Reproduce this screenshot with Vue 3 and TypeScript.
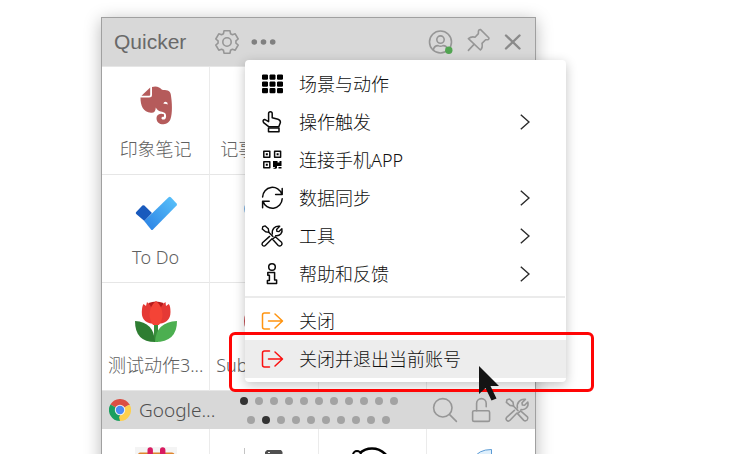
<script setup lang="ts">
interface Shape {
  d: string
  solid?: boolean
}

interface MenuEntry {
  label: string
  icon: Shape[]
  submenu?: boolean
  tone?: 'warn' | 'danger'
  active?: boolean
}

function gearOutline(): string {
  const points: string[] = []
  for (let tooth = 0; tooth < 6; tooth++) {
    const middle = tooth * 60 - 90
    const corners: [number, number][] = [[9, -23], [11.6, -15], [11.6, 15], [9, 23]]
    for (const [radius, offset] of corners) {
      const angle = ((middle + offset) * Math.PI) / 180
      points.push(`${(12 + radius * Math.cos(angle)).toFixed(2)} ${(12 + radius * Math.sin(angle)).toFixed(2)}`)
    }
  }
  return `M${points.join('L')}Z`
}

const gear: Shape[] = [
  { d: gearOutline() },
  { d: 'M16.200 12a4.200 4.200 0 1 1-8.400 0a4.200 4.200 0 1 1 8.400 0Z' },
]

const toolsIcon: Shape[] = [
  { d: 'M2 1.8L4.6 1L8 4.2L8.6 8L5 7.4L1.4 4.4Z' },
  { d: 'M8.4 8L13 12.6' },
  { d: 'M12.6 15.6L15.6 12.8L22.4 18.8Q23.6 20.6 22.2 22Q20.4 23.6 18.8 22.4Z' },
  { d: 'M9.4 12.4L1.6 19.4Q.4 21 1.8 22.4Q3.4 23.8 5 22.2L12 15' },
  { d: 'M12.4 10C11.4 4.6 15.4 .6 20.4 1.4L17 4.8L17.4 7L19.6 7.2L22.8 4C24 8.800 20.600 12.200 16 11.600' },
]

const exitIcon: Shape[] = [
  { d: 'M8.500 3H3.500Q1.500 3 1.500 5V17Q1.500 19 3.500 19H8.500' },
  { d: 'M7.500 11H21M14 4L21.500 11L14 18' },
]

const mainEntries: MenuEntry[] = [
  {
    label: '场景与动作',
    icon: [
      {
        solid: true,
        d: [1.5, 8.5, 15].map((y) => [1, 8.5, 16].map((x) => `M${x + 0.8} ${y}h4.400l.8 .8v3.600l-.8 .8h-4.400l-.8-.8v-3.600z`).join('')).join(''),
      },
    ],
  },
  {
    label: '操作触发',
    submenu: true,
    icon: [
      { d: 'M7.600 10.600V2.600a1.800 1.800 0 0 1 3.600 0V6.800L17 8.200Q19.600 9 19.400 11.600L17.800 15.800H8L2.600 11.600Q1.200 9 3.600 8.400L7.600 10.600' },
      { d: 'M7.500 17H18V20.800H7.500Z' },
    ],
  },
  {
    label: '连接手机APP',
    icon: [
      { d: 'M2.800 2.300h6v6h-6zM13.600 2.300h6v6h-6zM2.800 12.800h6v6h-6z' },
      { solid: true, d: 'M4.800 4.300h2v2h-2zM15.600 4.300h2v2h-2zM4.800 14.800h2v2h-2zM12 12h4.500v1.500h2v-1.500h2v5h-4.500v2h-2v-1h-2zM17.500 18h3v1.600h-3zM12.500 18.800h3v1h-3z' },
    ],
  },
  {
    label: '数据同步',
    submenu: true,
    icon: [
      { d: 'M1.600 10A9.800 9.800 0 0 1 20.800 7.400M21.200 1.400V7.600H14.600' },
      { d: 'M21.200 11.800A9.800 9.800 0 0 1 2 14.200M1.600 20.800V14.200H8.200' },
    ],
  },
  { label: '工具', submenu: true, icon: toolsIcon },
  {
    label: '帮助和反馈',
    submenu: true,
    icon: [
      { d: 'M14.300 4a3.300 3.300 0 1 1-6.600 0a3.300 3.300 0 1 1 6.600 0Z' },
      { d: 'M6.800 9.400H13.600V17H15.600V20.400H6.400V17.400H8.400V12.200H6.800Z' },
    ],
  },
]

const closeEntries: MenuEntry[] = [
  { label: '关闭', icon: exitIcon, tone: 'warn' },
  { label: '关闭并退出当前账号', icon: exitIcon, tone: 'danger', active: true },
]

interface Action {
  art?: string
  label?: string
  align?: 'near' | 'far'
}

const actions: Action[] = [
  { art: 'elephant', label: '印象笔记' },
  { art: 'speck', label: '记事', align: 'far' },
  {},
  {},
  { art: 'check', label: 'To Do' },
  { art: 'blue' },
  {},
  {},
  { art: 'tulip', label: '测试动作3...' },
  { art: 'red', label: 'Sub', align: 'near' },
  {},
  {},
]

const pagers = [
  { name: 'global', count: 11, current: 1 },
  { name: 'context', count: 10, current: 2 },
]
</script>

<template>
  <main class="page">
    <section class="panel">
      <header class="titlebar">
        <h1 class="title">Quicker</h1>
        <button class="tool" aria-label="设置">
          <svg class="glyph" viewBox="0 0 24 24"><path v-for="s in gear" :key="s.d" :d="s.d" /></svg>
        </button>
        <button class="tool" aria-label="更多">
          <svg class="glyph more" viewBox="0 0 24 24">
            <circle cx="3.300" cy="12" r="2.800" /><circle cx="12.500" cy="12" r="2.800" /><circle cx="21.700" cy="12" r="2.800" />
          </svg>
        </button>
        <span class="spacer"></span>
        <button class="tool" aria-label="账号">
          <svg class="glyph" viewBox="0 0 24 24">
            <circle cx="11.500" cy="12" r="11" />
            <circle cx="11.500" cy="9.600" r="3.700" />
            <path d="M4.400 20Q5 15.600 9 15.600Q11.500 17 14 15.600Q18 15.600 18.800 20" />
            <circle class="online" cx="19.800" cy="20.200" r="3.700" />
          </svg>
        </button>
        <button class="tool" aria-label="固定">
          <svg class="glyph" viewBox="0 0 24 24">
            <path d="M15.600 -.4L23.800 7.800Q24.400 9.400 22.400 9.800L20.600 9.800L17 13.400Q18 17.600 15.400 20L3.400 8.600Q6.400 6.200 10 7.200L13.400 3.600V1.400Q13.800 -.8 15.600 -.4Z" />
            <path d="M9 14.400L3.400 20.400" />
          </svg>
        </button>
        <button class="tool" aria-label="关闭窗口">
          <svg class="glyph cross" viewBox="0 0 24 24"><path d="M5 5.500L18.500 18.500M18.500 5.500L5 18.500" /></svg>
        </button>
      </header>

      <div class="grid">
        <div v-for="(a, i) in actions" :key="i" class="cell">
          <svg v-if="a.art" class="art" viewBox="0 0 42 42" aria-hidden="true">
            <g v-if="a.art === 'elephant'">
              <path fill="#b55b5b" d="M17 2C21 .6 25 2 27 4.800C31 5.200 35 5 35.700 9C37.200 17 37.600 29 35.500 34C34 38.500 29.500 39.400 27 39.200C22.500 39 20.800 34.500 21.800 31.500C23 28.600 26 28.200 29 29.200V31.800C26 31.400 25.500 34.400 28.200 34.600C31.500 34.800 31.600 30 30.400 28.400C28.500 26 23 27.500 20.800 22.500C20.600 26.500 19 28.200 16 27.800C8 26.800 5.500 21 5.500 12.500H14Q17 12.500 17 10Z" />
              <path fill="#b55b5b" d="M6.500 10.800L15.200 2.600V9.800Q15.200 10.800 14.200 10.800Z" />
              <path fill="#fff" d="M28.400 18.800Q28.600 16.800 30.600 16.800Q32.800 17 32.800 19.400Q30.600 18.400 28.400 18.800Z" />
            </g>
            <g v-else-if="a.art === 'check'">
              <defs>
                <linearGradient id="check-fill" x1="0" y1="1" x2="1" y2="0">
                  <stop offset="0" stop-color="#2a80e4" /><stop offset="1" stop-color="#5ac4fb" />
                </linearGradient>
              </defs>
              <path fill="#195abd" d="M7.400 12.600Q8.400 11.800 9.400 12.600L17 20L9.400 28L1.200 21Q.2 20 1.200 19Z" />
              <path fill="url(#check-fill)" d="M33.600 4.200Q34.700 3.400 35.800 4.200L41.600 10.400Q42.400 11.600 41.600 12.600L18 36.400Q17 37.400 16 36.400L9.200 28Z" />
            </g>
            <g v-else-if="a.art === 'tulip'">
              <path fill="#388e3c" d="M19 22H23V41H19Z" />
              <path fill="#2e7d32" d="M0 20Q19 21 20 41Q0 41 0 20Z" />
              <path fill="#4caf50" d="M42 20Q21 21 20 41Q42 41 42 20Z" />
              <path fill="#b71c1c" d="M13.500 2Q21 -1 28.500 2V16H13.500Z" />
              <path fill="#e53935" d="M12 1Q18 5 21 23Q6.500 23 6.800 11Q7 5 8.500 3L11 5Z" />
              <path fill="#e53935" d="M30.500 1Q24 5 21 23Q35.500 23 35.500 11Q35.500 5 33.800 3L31 5Z" />
              <path fill="#f44336" d="M21 0Q27 5 27.500 13Q27.500 19 24 24H18Q14.500 19 14.500 13Q15 5 21 0Z" />
            </g>
            <circle v-else-if="a.art === 'speck'" cx="4" cy="27" r="2" fill="#62b5d8" />
            <circle v-else-if="a.art === 'blue'" cx="10" cy="16" r="9" fill="#7db4e6" />
            <circle v-else cx="20" cy="20" r="19" fill="#c4494e" />
          </svg>
          <span v-if="a.label" class="label" :class="a.align">{{ a.label }}</span>
        </div>
      </div>

      <div class="context">
        <div class="app">
          <svg class="chrome" viewBox="0 0 22 22" aria-hidden="true">
            <path fill="#db4f44" d="M11 11L1.470 5.500A11 11 0 0 1 20.530 5.500Z" />
            <path fill="#fdd04e" d="M11 11L20.530 5.500A11 11 0 0 1 11 22Z" />
            <path fill="#1a9f60" d="M11 11V22A11 11 0 0 1 1.470 5.500Z" />
            <path fill="#db4f44" d="M11 6H20.800L20.530 5.500L11 4Z" />
            <path fill="#fdd04e" d="M15.500 13L11 22L10 18L13 14Z" />
            <circle cx="11" cy="11" r="5.200" fill="#f1f1f1" />
            <circle cx="11" cy="11" r="4.200" fill="#4a8af4" />
          </svg>
          <span class="app-name">Google...</span>
        </div>
        <div class="pagers">
          <div v-for="p in pagers" :key="p.name" class="pager">
            <span v-for="n in p.count" :key="n" class="dot" :class="{ on: n === p.current }"></span>
          </div>
        </div>
        <div class="context-tools">
          <button class="tool" aria-label="搜索">
            <svg class="glyph" viewBox="0 0 24 24"><circle cx="9.800" cy="9.800" r="9.200" /><path d="M16.400 16.400L23.400 23.400" /></svg>
          </button>
          <button class="tool" aria-label="锁定">
            <svg class="glyph" viewBox="0 0 24 24">
              <rect x="3.600" y="12.800" width="17" height="10.600" rx="1.500" />
              <path d="M7.600 12.800V5.400A4.800 4.800 0 0 1 17.200 5.400V8.800" />
            </svg>
          </button>
          <button class="tool" aria-label="工具">
            <svg class="glyph" viewBox="0 0 24 24"><path v-for="s in toolsIcon" :key="s.d" :d="s.d" /></svg>
          </button>
        </div>
      </div>

      <div class="grid">
        <div class="cell">
          <svg class="art" viewBox="0 0 42 42" aria-hidden="true">
            <path fill="#f4f4f4" d="M0 0H42V42H0Z" />
            <path fill="#e0862e" d="M3 8Q3 5.500 5 5.500H37Q39.500 5.500 39.500 8V40H3Z" />
            <path fill="#d81b60" d="M12.500 8V3a2.700 2.700 0 0 1 5.400 0V8ZM25 8V3a2.700 2.700 0 0 1 5.400 0V8Z" />
          </svg>
        </div>
        <div class="cell">
          <svg class="art" viewBox="0 0 42 42" aria-hidden="true">
            <path fill="#c4c4c4" d="M1 1H2V41H1Z" />
            <path fill="#505050" d="M24 3H38L39.500 5V20H22V5Z" />
            <path fill="#eee" d="M25 5h2v1h-2z" />
          </svg>
        </div>
        <div class="cell">
          <svg class="art" viewBox="0 0 42 42" aria-hidden="true">
            <circle cx="21" cy="20" r="18.500" fill="none" stroke="#000" stroke-width="2.500" />
            <circle cx="6" cy="8" r="4" fill="#fff" stroke="#000" stroke-width="2" />
          </svg>
        </div>
        <div class="cell">
          <svg class="art" viewBox="0 0 42 42" aria-hidden="true">
            <path fill="#e0f0fc" stroke="#5b9bd5" d="M31.500 2.500V22H13.500V12Q18 2.500 31.500 2.500Z" />
          </svg>
        </div>
      </div>

      <nav class="menu" aria-label="更多">
        <button v-for="e in mainEntries" :key="e.label" class="entry">
          <svg class="entry-icon" :viewBox="e.icon === toolsIcon ? '0 0 24 24' : '0 0 22 22'" aria-hidden="true">
            <path v-for="s in e.icon" :key="s.d" :d="s.d" :class="{ solid: s.solid }" />
          </svg>
          <span class="entry-label">{{ e.label }}</span>
          <svg v-if="e.submenu" class="chevron" viewBox="0 0 10 16" aria-hidden="true"><path d="M.8 .8L9 8L.8 15.200" /></svg>
        </button>
        <hr class="rule" />
        <button v-for="e in closeEntries" :key="e.label" class="entry" :class="[e.tone, { active: e.active }]">
          <svg class="entry-icon" viewBox="0 0 22 22" aria-hidden="true">
            <path v-for="s in e.icon" :key="s.d" :d="s.d" />
          </svg>
          <span class="entry-label">{{ e.label }}</span>
        </button>
        <div class="highlight"></div>
        <svg class="pointer" viewBox="0 0 22 36" aria-hidden="true">
          <path d="M0 0L20 20H11.500L17.500 32.500L12.500 34.500L6.500 22L0 28Z" />
        </svg>
      </nav>
    </section>
  </main>
</template>

<style>
body {
  margin: 0;
  background: #fff;
}
</style>

<style scoped>
.page {
  box-sizing: border-box;
  height: 100vh;
  overflow: hidden;
  padding: 17px 212px 0 101px;
  font-family: "Noto Sans", "Noto Sans CJK SC", sans-serif;
  font-weight: 300;
}

.panel {
  position: relative;
  border: 1px solid #a0a0a0;
  background: #fff;
  box-shadow: 0 3px 16px rgba(0, 0, 0, 0.28);
}

button {
  margin: 0;
  padding: 0;
  border: 0;
  background: none;
  font: inherit;
  color: inherit;
}

.titlebar {
  display: flex;
  align-items: center;
  height: 48px;
  padding: 0 4px 0 12px;
  background: #d8d8d8;
  border-bottom: 1px solid #e6e6e6;
}

.title {
  margin: 0 23px 0 0;
  font: 400 21px/24px "Liberation Sans", sans-serif;
  color: #696969;
}

.spacer {
  flex: 1;
}

.tool {
  display: flex;
  justify-content: center;
  width: 36px;
}

.glyph {
  width: 24px;
  height: 24px;
  overflow: visible;
  fill: none;
  stroke: #969696;
  stroke-width: 1.6;
  stroke-linejoin: round;
  stroke-linecap: round;
}

.more {
  fill: #808080;
  stroke: none;
}

.cross {
  stroke: #8a8a8a;
  stroke-width: 2.4;
}

.online {
  fill: #52a552;
  stroke: none;
}

.grid {
  display: grid;
  grid-template-columns: repeat(4, 1fr);
}

.cell {
  box-sizing: border-box;
  display: flex;
  flex-direction: column;
  align-items: center;
  gap: 9px;
  min-width: 0;
  height: 108px;
  padding-top: 18px;
  border-right: 1px solid #ebebeb;
  border-bottom: 1px solid #e6e6e6;
}

.cell:nth-child(4n) {
  border-right: 0;
}

.art {
  flex: none;
  width: 42px;
  height: 42px;
  overflow: visible;
}

.label {
  font-size: 18px;
  line-height: 26px;
  white-space: nowrap;
  color: #606060;
}

.near,
.far {
  align-self: flex-start;
  padding-left: 6px;
}

.far {
  padding-left: 10px;
}

.context {
  display: grid;
  grid-template-columns: 1fr auto 1fr;
  align-items: center;
  height: 38px;
  background: #d8d8d8;
}

.app {
  display: flex;
  align-items: center;
  gap: 8px;
  padding-left: 7px;
}

.chrome {
  width: 22px;
  height: 22px;
}

.app-name {
  font-size: 19px;
  line-height: 26px;
  color: #505050;
}

.pagers {
  display: grid;
  gap: 11px;
}

.pager {
  display: flex;
  justify-content: center;
  gap: 7px;
}

.dot {
  width: 8px;
  height: 8px;
  border-radius: 50%;
  background: #a3a3a3;
}

.on {
  background: #333;
}

.context-tools {
  display: flex;
  justify-content: flex-end;
}

.menu {
  position: absolute;
  top: 42px;
  left: 143px;
  right: -31px;
  padding: 5px 0 4px;
  border-radius: 4px;
  background: #fff;
  box-shadow: 0 3px 12px rgba(0, 0, 0, 0.24);
  color: #101010;
}

.entry {
  display: flex;
  align-items: center;
  gap: 16px;
  width: 100%;
  height: 38px;
  padding: 0 36px 0 16px;
  text-align: left;
}

.active {
  background: #ededed;
}

.entry-icon {
  flex: none;
  width: 22px;
  height: 22px;
  overflow: visible;
  fill: none;
  stroke: #0a0a0a;
  stroke-width: 1.5;
  stroke-linejoin: round;
  stroke-linecap: round;
}

.solid {
  fill: #000;
  stroke: none;
}

.warn .entry-icon {
  stroke: #ff9410;
}

.danger .entry-icon {
  stroke: #fa1010;
}

.entry-label {
  flex: 1;
  font-size: 18px;
  line-height: 26px;
}

.chevron {
  width: 10px;
  height: 16px;
  fill: none;
  stroke: #2a2a2a;
  stroke-width: 1.4;
}

.rule {
  height: 2px;
  margin: 3px 1px 4px 0;
  border: 0;
  background: #ebebeb;
}

.highlight {
  position: absolute;
  left: -16px;
  right: -28px;
  bottom: -10px;
  box-sizing: border-box;
  height: 60px;
  border: 3px solid #ff0505;
  border-radius: 6px;
}

.pointer {
  position: absolute;
  right: 65px;
  bottom: -20px;
  width: 22px;
  height: 36px;
  fill: #141414;
}
</style>
